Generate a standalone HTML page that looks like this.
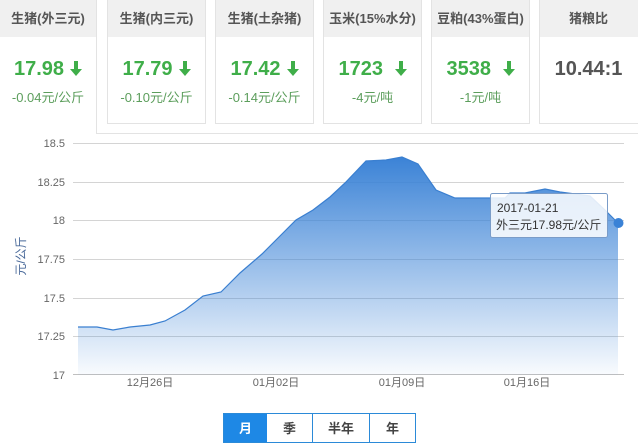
<!DOCTYPE html>
<html><head><meta charset="utf-8"><style>
body{margin:0;width:638px;height:441px;background:#fff;font-family:"Liberation Sans","Noto Sans CJK SC",sans-serif;position:relative;overflow:hidden}
.c{position:absolute;top:0;height:124px;border:1px solid #e3e3e3;border-top:none;box-sizing:border-box;background:#fff;text-align:center}
.h{height:37px;background:#f0f0f0;line-height:37px;font-size:13px;font-weight:bold;color:#555}
.v{margin-top:20px;font-size:20px;font-weight:bold;color:#3fae49;height:24px;line-height:24px}
.d{margin-top:6px;font-size:13px;color:#5c9e5c}
.ar{display:inline-block;width:12px;height:16px;vertical-align:-1px;margin-left:6px}
</style></head><body>
<div class="c" style="left:0;width:97px;height:134px;border-left:none;border-bottom:none"><div class="h">生猪(外三元)</div><div class="v">17.98<svg class="ar" viewBox="0 0 12 16"><rect x="4" y="1" width="4" height="9" fill="#3fae49"/><path d="M0 9h12l-6 7z" fill="#3fae49"/></svg></div><div class="d">-0.04元/公斤</div></div>
<div style="position:absolute;left:96px;top:133px;width:542px;height:1px;background:#e3e3e3"></div>
<div class="c" style="left:107px;width:99px"><div class="h">生猪(内三元)</div><div class="v">17.79<svg class="ar" viewBox="0 0 12 16"><rect x="4" y="1" width="4" height="9" fill="#3fae49"/><path d="M0 9h12l-6 7z" fill="#3fae49"/></svg></div><div class="d">-0.10元/公斤</div></div>
<div class="c" style="left:215px;width:99px"><div class="h">生猪(土杂猪)</div><div class="v">17.42<svg class="ar" viewBox="0 0 12 16"><rect x="4" y="1" width="4" height="9" fill="#3fae49"/><path d="M0 9h12l-6 7z" fill="#3fae49"/></svg></div><div class="d">-0.14元/公斤</div></div>
<div class="c" style="left:323px;width:99px"><div class="h">玉米(15%水分)</div><div class="v">1723 <svg class="ar" viewBox="0 0 12 16"><rect x="4" y="1" width="4" height="9" fill="#3fae49"/><path d="M0 9h12l-6 7z" fill="#3fae49"/></svg></div><div class="d">-4元/吨</div></div>
<div class="c" style="left:431px;width:99px"><div class="h">豆粕(43%蛋白)</div><div class="v">3538 <svg class="ar" viewBox="0 0 12 16"><rect x="4" y="1" width="4" height="9" fill="#3fae49"/><path d="M0 9h12l-6 7z" fill="#3fae49"/></svg></div><div class="d">-1元/吨</div></div>
<div class="c" style="left:539px;width:110px"><div class="h" style="padding-right:11px">猪粮比</div><div class="v" style="color:#555;padding-right:11px">10.44:1</div></div>

<svg style="position:absolute;left:0;top:0" width="638" height="441">
<defs><linearGradient id="g" gradientUnits="userSpaceOnUse" x1="0" y1="156" x2="0" y2="375"><stop offset="0" stop-color="#3a82d6"/><stop offset="1" stop-color="#3a82d6" stop-opacity="0.03"/></linearGradient></defs>
<g stroke="#d4d4d4" stroke-width="1">
<line x1="73" y1="143.5" x2="624" y2="143.5"/><line x1="73" y1="182.5" x2="624" y2="182.5"/><line x1="73" y1="220.5" x2="624" y2="220.5"/><line x1="73" y1="259.5" x2="624" y2="259.5"/><line x1="73" y1="298.5" x2="624" y2="298.5"/><line x1="73" y1="336.5" x2="624" y2="336.5"/><line x1="73" y1="374.5" x2="624" y2="374.5" stroke="#c0c0c0"/></g>
<path d="M78 327L97 327L113 330L130 327L150 325L165 321L185 310L203 296L221 292L240 273L262 254L280 236L296 220L313 210L330 197L345 183L366 161L386 160L402 157L418 164L436 190L455 198L480 198L505 198L510 193L525 193L545 189L560 192L590 196L605 210L618 223L618 375L78 375Z" fill="url(#g)"/>
<path d="M78 327L97 327L113 330L130 327L150 325L165 321L185 310L203 296L221 292L240 273L262 254L280 236L296 220L313 210L330 197L345 183L366 161L386 160L402 157L418 164L436 190L455 198L480 198L505 198L510 193L525 193L545 189L560 192L590 196L605 210L618 223" fill="none" stroke="#3a7fd0" stroke-width="1.2"/>
<g font-size="11" fill="#666" text-anchor="end" font-family="Liberation Sans,sans-serif">
<text x="65" y="147">18.5</text><text x="65" y="186">18.25</text><text x="65" y="224">18</text><text x="65" y="263">17.75</text><text x="65" y="302">17.5</text><text x="65" y="340">17.25</text><text x="65" y="379">17</text></g>
<text transform="translate(25,256) rotate(-90)" text-anchor="middle" font-size="12" fill="#4a6a9a" font-family="Liberation Sans,Noto Sans CJK SC,sans-serif">元/公斤</text>
<g font-size="11" fill="#666" text-anchor="middle" font-family="Liberation Sans,Noto Sans CJK SC,sans-serif">
<text x="150" y="386">12月26日</text><text x="276" y="386">01月02日</text><text x="402" y="386">01月09日</text><text x="527" y="386">01月16日</text></g>
<rect x="490.5" y="193.5" width="117" height="44" rx="2" fill="#fff" fill-opacity="0.85" stroke="#7a9cc8"/>
<g font-size="12" fill="#333" font-family="Liberation Sans,Noto Sans CJK SC,sans-serif"><text x="497" y="212">2017-01-21</text><text x="496" y="229">外三元17.98元/公斤</text></g>
<circle cx="618.5" cy="223" r="5" fill="#3a82d6"/>
</svg>
<div style="position:absolute;left:223px;top:413px;width:193px;height:30px;border:1px solid #2b8ad8;box-sizing:border-box;display:flex;font-size:13px;font-weight:bold;color:#444">
<div style="width:43px;background:#1e88e5;color:#fff;text-align:center;line-height:30px">月</div>
<div style="width:45px;text-align:center;line-height:30px;border-right:1px solid #2b8ad8">季</div>
<div style="width:56px;text-align:center;line-height:30px;border-right:1px solid #2b8ad8">半年</div>
<div style="flex:1;text-align:center;line-height:30px">年</div></div>
</body></html>
